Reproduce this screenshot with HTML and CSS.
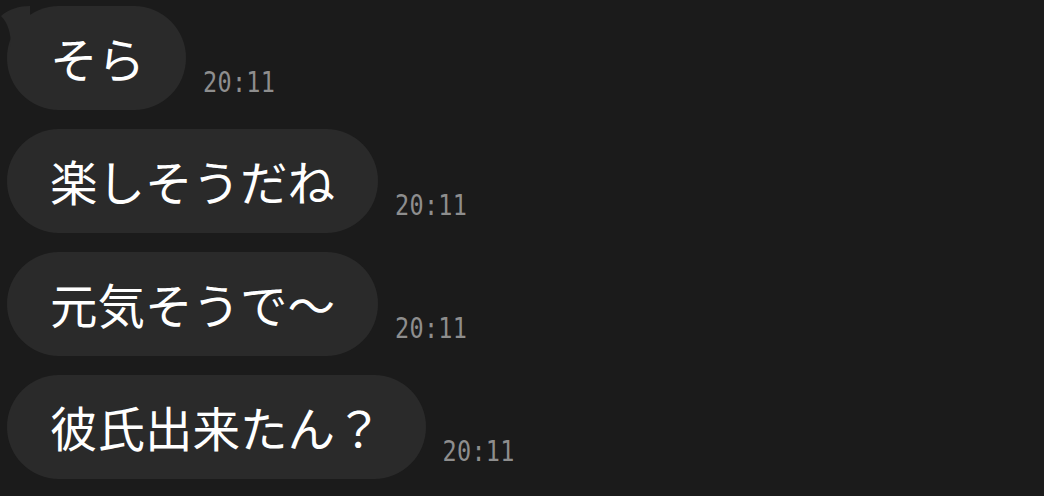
FILE: index.html
```html
<!DOCTYPE html>
<html lang="ja">
<head>
    <meta charset="UTF-8">
    <meta name="viewport" content="width=device-width, initial-scale=1.0">
    <title>トーク</title>
    <link rel="stylesheet" href="styles.css">
</head>
<body>
    <div class="chat">
        <div class="row">
            <div class="bubble first">
                <svg class="tail" width="30" height="44" viewBox="0 0 30 44">
                    <path d="M30 3 C19 3 9 6 1 13 C8 20 11 30 11 44 L30 44 Z" fill="#2a2a2a"/>
                </svg>
                そら
            </div>
            <span class="time">20:11</span>
        </div>
        <div class="row">
            <div class="bubble">楽しそうだね</div>
            <span class="time">20:11</span>
        </div>
        <div class="row">
            <div class="bubble">元気そうで〜</div>
            <span class="time">20:11</span>
        </div>
        <div class="row">
            <div class="bubble">彼氏出来たん？</div>
            <span class="time">20:11</span>
        </div>
    </div>
</body>
</html>
```
FILE: styles.css
```css
html, body {
    margin: 0;
    padding: 0;
    background: #1b1b1b;
}
body {
    font-family: "Noto Sans CJK JP", "Noto Sans", sans-serif;
    width: 1044px;
    height: 496px;
    overflow: hidden;
}
.chat {
    display: flex;
    flex-direction: column;
    gap: 19px;
    padding: 6px 0 0 7px;
}
.row {
    display: flex;
    align-items: flex-end;
    gap: 17px;
}
.bubble {
    position: relative;
    background: #2a2a2a;
    color: #ffffff;
    font-size: 47.5px;
    line-height: 60px;
    height: 60px;
    padding: 22px 43px;
    border-radius: 52px;
    white-space: nowrap;
}
.tail {
    position: absolute;
    left: -7px;
    top: -3px;
}
.bubble.first {
    padding-right: 41px;
}
.time {
    font-family: "DejaVu Sans Mono", "Liberation Mono", monospace;
    color: #8e8e8e;
    font-size: 23.5px;
    letter-spacing: 0.3px;
    margin-bottom: 11px;
    transform: scaleY(1.2);
    transform-origin: bottom left;
}
```
